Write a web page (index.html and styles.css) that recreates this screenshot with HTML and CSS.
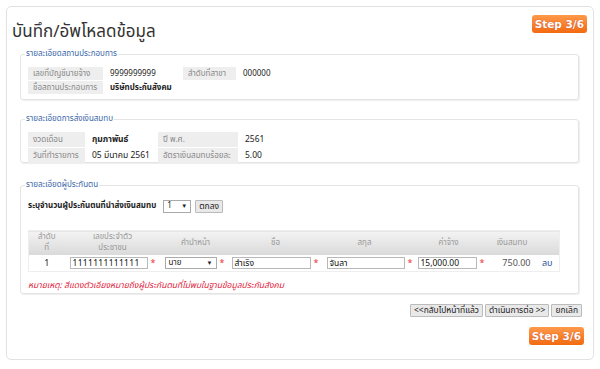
FILE: index.html
```html
<!DOCTYPE html>
<html lang="th">
<head>
    <meta charset="UTF-8">
    <title>บันทึก/อัพโหลดข้อมูล</title>
    <link rel="stylesheet" href="styles.css">
</head>
<body>
    <div class="panel">
        <div class="panel-head">
            <h1>บันทึก/อัพโหลดข้อมูล</h1>
            <span class="step">Step 3/6</span>
        </div>

        <!-- Employer -->
        <fieldset class="box box-employer">
            <legend>รายละเอียดสถานประกอบการ</legend>
            <table class="info info-employer">
                <colgroup><col class="k1"><col class="v1"><col class="k2"><col class="v2"></colgroup>
                <tr>
                    <td class="lbl">เลขที่บัญชีนายจ้าง</td>
                    <td class="val">9999999999</td>
                    <td class="lbl">ลำดับที่สาขา</td>
                    <td class="val">000000</td>
                </tr>
                <tr>
                    <td class="lbl">ชื่อสถานประกอบการ</td>
                    <td class="val bold" colspan="3">บริษัทประกันสังคม</td>
                </tr>
            </table>
        </fieldset>

        <!-- Contribution -->
        <fieldset class="box box-pay">
            <legend>รายละเอียดการส่งเงินสมทบ</legend>
            <table class="info info-pay">
                <colgroup><col class="k1"><col class="v1"><col class="k2"><col class="v2"></colgroup>
                <tr>
                    <td class="lbl">งวดเดือน</td>
                    <td class="val bold">กุมภาพันธ์</td>
                    <td class="lbl">ปี พ.ศ.</td>
                    <td class="val">2561</td>
                </tr>
                <tr>
                    <td class="lbl">วันที่ทำรายการ</td>
                    <td class="val">05 มีนาคม 2561</td>
                    <td class="lbl">อัตราเงินสมทบร้อยละ</td>
                    <td class="val">5.00</td>
                </tr>
            </table>
        </fieldset>

        <!-- Insured persons -->
        <fieldset class="box box-people">
            <legend>รายละเอียดผู้ประกันตน</legend>
            <div class="count-row">
                <span class="bold">ระบุจำนวนผู้ประกันตนที่นำส่งเงินสมทบ</span>
                <span class="sel sel-count">1<i>▼</i></span>
                <button class="btn">ตกลง</button>
            </div>

            <table class="grid">
                <colgroup>
                    <col class="c-no"><col class="c-id"><col class="c-title"><col class="c-name">
                    <col class="c-last"><col class="c-wage"><col class="c-amt"><col class="c-del">
                </colgroup>
                <thead>
                    <tr>
                        <th>ลำดับ<br>ที่</th>
                        <th>เลขประจำตัว<br>ประชาชน</th>
                        <th>คำนำหน้า</th>
                        <th>ชื่อ</th>
                        <th>สกุล</th>
                        <th>ค่าจ้าง</th>
                        <th>เงินสมทบ</th>
                        <th></th>
                    </tr>
                </thead>
                <tbody>
                    <tr>
                        <td class="center">1</td>
                        <td><span class="inp inp-id">1111111111111</span><b class="req">*</b></td>
                        <td><span class="sel sel-title">นาย<i>▼</i></span><b class="req">*</b></td>
                        <td><span class="inp inp-name">สำเริง</span><b class="req">*</b></td>
                        <td><span class="inp inp-last">จันลา</span><b class="req">*</b></td>
                        <td><span class="inp inp-wage">15,000.00</span><b class="req">*</b></td>
                        <td class="num">750.00</td>
                        <td class="center"><a class="del">ลบ</a></td>
                    </tr>
                </tbody>
            </table>

            <p class="note">หมายเหตุ: สีแดงตัวเอียงหมายถึงผู้ประกันตนที่ไม่พบในฐานข้อมูลประกันสังคม</p>
        </fieldset>

        <div class="actions">
            <button class="btn">&lt;&lt;กลับไปหน้าที่แล้ว</button>
            <button class="btn">ดำเนินการต่อ &gt;&gt;</button>
            <button class="btn">ยกเลิก</button>
        </div>

        <div class="foot">
            <span class="step">Step 3/6</span>
        </div>
    </div>
</body>
</html>
```

FILE: styles.css
```css
body { margin: 0; padding: 6px; font-family: Tahoma, "Noto Sans Thai", "Noto Sans", sans-serif; font-size: 9px; color: #222; background: #fff; }
.panel { border: 1px solid #e2e2e2; border-radius: 5px; height: 354px; padding: 0 6px 0 13px; box-sizing: border-box; }
.panel-head { display: flex; justify-content: space-between; align-items: flex-start; padding: 8px 0 0 0; margin-left: -8px; height: 34px; box-sizing: border-box; }
h1 { margin: 7px 0 0 0; font-size: 17px; font-weight: normal; color: #333; line-height: 20px; }
.step { display: inline-block; background: linear-gradient(#ff9a4a, #f26a10); color: #fff; font-family: Verdana, "DejaVu Sans", sans-serif; font-weight: bold; font-size: 10.5px; line-height: 18px; padding: 0 3px; border-radius: 3px; text-shadow: 0 0 1px #b44; }

.box { margin: 8px 8px 0 0; padding: 6px 7px 7px 7px; border: 1px solid #e4e4e4; border-radius: 3px; box-shadow: 1px 1px 1px #eee; box-sizing: border-box; }
.box legend { color: #3a66a8; font-size: 8px; padding: 0 1px; margin-left: -3px; }
.box-employer { margin-top: 7px; height: 52px; }
.box-pay { margin-top: 13px; height: 50px; }
.box-people { margin-top: 16px; height: 115px; padding-top: 8px; }

.info { border-collapse: separate; border-spacing: 0 1px; table-layout: fixed; }
.info td { padding: 0 5px; height: 13px; white-space: nowrap; overflow: hidden; }
.info .lbl { background: #eee; color: #888; font-size: 8px; }
.info .val { color: #222; padding-left: 7px; font-size: 8px; }
.info-employer { width: 288px; }
.info-employer .k1 { width: 75px; }
.info-employer .v1 { width: 80px; }
.info-employer .k2 { width: 53px; }
.info-employer .v2 { width: 80px; }
.info-pay { width: 270px; }
.info-pay td { height: 15px; }
.info-pay .val { font-size: 8.5px; }
.info-pay .k1 { width: 57px; }
.info-pay .v1 { width: 73px; }
.info-pay .k2 { width: 80px; }
.info-pay .v2 { width: 60px; }
.bold { font-weight: bold; }

.count-row { display: flex; align-items: center; gap: 4px; font-size: 8px; height: 14px; }
.sel { display: inline-flex; justify-content: space-between; align-items: center; border: 1px solid #aaa; background: #fff; padding: 0 3px; height: 11px; box-sizing: border-box; font-size: 8px; }
.sel i { font-style: normal; font-size: 6px; }
.sel-count { width: 28px; height: 13px; margin-left: 3px; }
.btn { font-family: inherit; font-size: 8.5px; color: #222; background: #e9e9e9; border: 1px solid #bbb; padding: 0 3px; height: 13px; line-height: 11px; border-radius: 1px; }

.grid { margin-top: 17px; width: 531px; border-collapse: collapse; border: 1px solid #eee; table-layout: fixed; }
.grid th { background: linear-gradient(#f3f3f3, #d9d9d9); color: #999; font-weight: normal; font-size: 8px; height: 24px; line-height: 11px; padding: 0; }
.grid td { height: 16px; padding: 0; white-space: nowrap; }
.c-no { width: 36px; }
.c-id { width: 96px; }
.c-title { width: 70px; }
.c-name { width: 90px; }
.c-last { width: 88px; }
.c-wage { width: 80px; }
.c-amt { width: 47px; }
.c-del { width: 24px; }
.center { text-align: center; }
.num { text-align: right; color: #555; padding-right: 5px !important; }
.inp { display: inline-block; vertical-align: middle; border: 1px solid #b8b8b8; height: 12px; line-height: 11px; box-sizing: border-box; padding: 0 2px; font-size: 8.5px; color: #111; background: #fff; }
.inp-id { width: 78px; margin-left: 5px; letter-spacing: 0.3px; }
.sel-title { width: 52px; height: 12px; vertical-align: middle; margin-left: 4px; }
.inp-name { width: 79px; margin-left: 1px; }
.inp-last { width: 78px; margin-left: 6px; }
.inp-wage { width: 59px; margin-left: 9px; }
.req { color: #e33; font-weight: normal; margin-left: 3px; vertical-align: middle; }
.del { color: #2b4f9a; }
.note { margin: 7px 0 0 0; color: #e0203a; font-style: italic; font-size: 8.5px; }

.actions { display: flex; justify-content: flex-end; gap: 2px; margin: 10px 5px 0 0; }
.foot { display: flex; justify-content: flex-end; margin: 10px 3px 0 0; }
```
